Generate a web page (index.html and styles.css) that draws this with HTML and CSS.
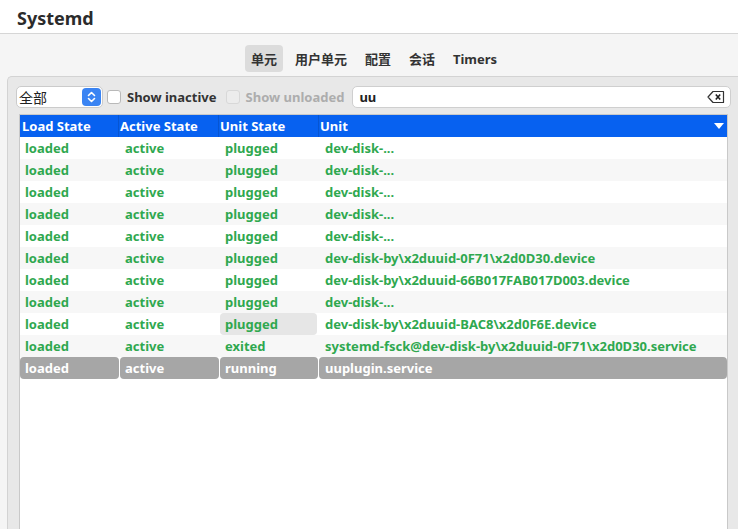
FILE: index.html
```html
<!DOCTYPE html>
<html>
<head>
<meta charset="utf-8">
<link rel="stylesheet" href="styles.css">
</head>
<body>
<div class="window">
  <div class="titlebar"><span class="title">Systemd</span></div>
  <div class="tabs">
    <span class="tab active">单元</span>
    <span class="tab">用户单元</span>
    <span class="tab">配置</span>
    <span class="tab">会话</span>
    <span class="tab">Timers</span>
  </div>
  <div class="panel">
    <div class="controls">
      <div class="combo">
        <span class="combo-text">全部</span>
        <span class="stepper">
          <svg width="19" height="18" viewBox="0 0 19 18"><path d="M6.5 7.5 L9.5 4.5 L12.5 7.5 M6.5 10.5 L9.5 13.5 L12.5 10.5" fill="none" stroke="#fff" stroke-width="1.6" stroke-linecap="round" stroke-linejoin="round"/></svg>
        </span>
      </div>
      <label class="check"><span class="box"></span><span class="label">Show inactive</span></label>
      <label class="check disabled"><span class="box"></span><span class="label">Show unloaded</span></label>
      <div class="search">
        <span class="search-text">uu</span>
        <svg class="clear" width="18" height="14" viewBox="0 0 18 14"><path d="M6 1.5 H16.5 V12.5 H6 L1 7 Z" fill="#fff" stroke="#333" stroke-width="1.2" stroke-linejoin="round"/><path d="M8.8 4.5 L13.2 9.5 M13.2 4.5 L8.8 9.5" stroke="#222" stroke-width="1.6"/></svg>
      </div>
    </div>
    <div class="table">
      <div class="thead">
        <span class="th">Load State</span>
        <span class="th">Active State</span>
        <span class="th">Unit State</span>
        <span class="th last">Unit<svg class="sort" width="10" height="7" viewBox="0 0 10 7"><path d="M0 0 H10 L5 6 Z" fill="#fff"/></svg></span>
      </div>
      <div class="row"><span class="td">loaded</span><span class="td">active</span><span class="td">plugged</span><span class="td">dev-disk-...</span></div>
      <div class="row"><span class="td">loaded</span><span class="td">active</span><span class="td">plugged</span><span class="td">dev-disk-...</span></div>
      <div class="row"><span class="td">loaded</span><span class="td">active</span><span class="td">plugged</span><span class="td">dev-disk-...</span></div>
      <div class="row"><span class="td">loaded</span><span class="td">active</span><span class="td">plugged</span><span class="td">dev-disk-...</span></div>
      <div class="row"><span class="td">loaded</span><span class="td">active</span><span class="td">plugged</span><span class="td">dev-disk-...</span></div>
      <div class="row"><span class="td">loaded</span><span class="td">active</span><span class="td">plugged</span><span class="td">dev-disk-by\x2duuid-0F71\x2d0D30.device</span></div>
      <div class="row"><span class="td">loaded</span><span class="td">active</span><span class="td">plugged</span><span class="td">dev-disk-by\x2duuid-66B017FAB017D003.device</span></div>
      <div class="row"><span class="td">loaded</span><span class="td">active</span><span class="td">plugged</span><span class="td">dev-disk-...</span></div>
      <div class="row"><span class="td">loaded</span><span class="td">active</span><span class="td hover">plugged</span><span class="td">dev-disk-by\x2duuid-BAC8\x2d0F6E.device</span></div>
      <div class="row"><span class="td">loaded</span><span class="td">active</span><span class="td">exited</span><span class="td">systemd-fsck@dev-disk-by\x2duuid-0F71\x2d0D30.service</span></div>
      <div class="row selected"><span class="td">loaded</span><span class="td">active</span><span class="td">running</span><span class="td">uuplugin.service</span></div>
    </div>
  </div>
</div>
</body>
</html>
```
FILE: styles.css
```css
* { box-sizing: border-box; }
html, body { margin: 0; padding: 0; }
body {
  width: 738px;
  height: 529px;
  overflow: hidden;
  background: #f5f5f5;
  font-family: "Noto Sans", "Noto Sans CJK SC", sans-serif;
  font-weight: bold;
  font-size: 13px;
  color: #333;
}
.window { display: flex; flex-direction: column; height: 529px; }
.titlebar {
  height: 34px;
  background: #fff;
  border-bottom: 1px solid #d6d6d6;
  padding: 6px 0 0 17px;
}
.title { font-size: 18px; color: #2b2b2b; line-height: 24px; }
.tabs {
  display: flex;
  justify-content: center;
  gap: 6px;
  padding-left: 10px;
  margin-top: 11px;
  height: 27px;
}
.tab {
  padding: 2px 6px 0;
  line-height: 25px;
  border-radius: 4px;
  color: #333;
}
.tab.active { background: #dcdcdc; }
.panel {
  flex: 1;
  margin: 4px 0 0 7px;
  background: #e8e8e8;
  border: 1px solid #d3d3d3;
  border-right: none;
  border-bottom: none;
  border-radius: 5px 0 0 0;
  padding: 9px 0 0 8px;
  display: flex;
  flex-direction: column;
}
.controls { display: flex; align-items: center; height: 22px; }
.combo {
  width: 87px;
  height: 22px;
  background: #fff;
  border: 1px solid #cbcbcb;
  border-radius: 5px;
  display: flex;
  align-items: center;
  justify-content: space-between;
  padding: 0 1px 0 1px;
}
.combo-text { font-weight: normal; font-size: 14px; color: #222; padding-left: 1px; }
.stepper {
  width: 19px;
  height: 18px;
  background: #3a84f3;
  border-radius: 4px;
  display: flex;
}
.check { display: flex; align-items: center; margin-left: 4px; }
.check.disabled { margin-left: 9px; }
.box {
  width: 14px;
  height: 14px;
  background: #fff;
  border: 1px solid #b9b9b9;
  border-radius: 3px;
}
.check.disabled .box { border-color: #d8d8d8; background: #ececec; }
.label { margin-left: 6px; color: #333; }
.check.disabled .label { color: #adadad; }
.search {
  margin-left: 8px;
  width: 379px;
  height: 22px;
  background: #fff;
  border: 1px solid #cfcfcf;
  border-radius: 5px;
  display: flex;
  align-items: center;
  justify-content: space-between;
  padding: 0 5px 0 6px;
}
.search-text { color: #222; }
.clear { display: block; }
.table {
  flex: 1;
  margin: 6px 0 0 3px;
  width: 709px;
  background: #fff;
  border: 1px solid #c9c9c9;
  border-bottom: none;
}
.thead {
  display: grid;
  grid-template-columns: 98px 100px 100px 1fr;
  height: 22px;
  background: #0761f0;
}
.row {
  display: grid;
  grid-template-columns: 100px 100px 100px 1fr;
  height: 22px;
}
.th {
  color: #fff;
  padding-left: 1px;
  line-height: 22px;
  border-left: 1px solid rgba(0, 0, 0, 0.12);
}
.th:first-child { border-left: none; padding-left: 2px; }
.th.last { display: flex; justify-content: space-between; align-items: center; padding-right: 3px; }
.sort { display: block; margin-top: 1px; }
.row:nth-child(odd) { background: #f7f7f7; }
.td {
  color: #2fa84f;
  padding-left: 5px;
  line-height: 22px;
  white-space: nowrap;
}
.td.hover { background: #e6e6e6; border-radius: 4px; margin-right: 3px; }
.row.selected { background: #fff; gap: 1px; grid-template-columns: 99px 99px 98px 1fr; }
.row.selected .td {
  background: #a6a6a6;
  color: #fff;
  border-radius: 4px;
}
.row.selected .td:last-child { padding-left: 6px; }
```
